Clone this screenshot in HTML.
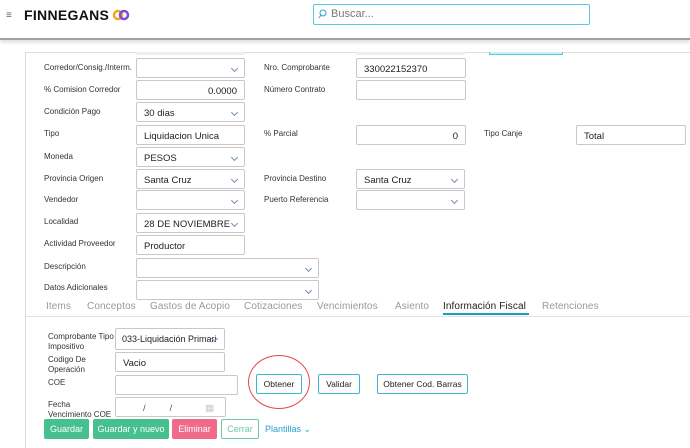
<!DOCTYPE html>
<html><head><meta charset="utf-8"><style>
*{box-sizing:border-box;margin:0;padding:0}
body{width:690px;height:448px;overflow:hidden;background:#fff;font-family:"Liberation Sans",sans-serif;position:relative;color:#222}
.a{position:absolute}
.hdr{left:0;top:0;width:690px;height:40px;background:#fff;border-bottom:2px solid #9aa3ab;box-shadow:0 2px 4px rgba(0,0,0,.15)}
.lab{position:absolute;font-size:8px;color:#333;white-space:nowrap}
.in{position:absolute;height:20px;border:1px solid #c8c8c8;border-radius:2px;font-size:9.5px;padding:5px 7px;background:#fff;color:#222;white-space:nowrap;overflow:hidden}
.sel{padding-right:16px}
.sel::after{content:"";position:absolute;right:7px;top:7px;width:4px;height:4px;border-right:1px solid #6a8fb5;border-bottom:1px solid #6a8fb5;transform:rotate(45deg)}
.r{text-align:right}
.tab{position:absolute;top:301px;font-size:10px;color:#999;letter-spacing:.1px;white-space:nowrap}
.btn{position:absolute;height:20px;border:1px solid #3bb8cf;border-radius:2px;font-size:8.5px;text-align:center;line-height:18px;background:#fff}
.g{position:absolute;top:419px;height:20px;border-radius:2px;font-size:9px;color:#fff;text-align:center;line-height:20px}
</style></head><body>
<div class="a hdr"></div>
<div class="a" style="left:6px;top:10px;font-size:10px;color:#666">≡</div>
<div class="a" style="left:24px;top:7px;font-size:14px;font-weight:bold;color:#111;letter-spacing:.3px">FINNEGANS</div>
<svg class="a" style="left:112px;top:8px" width="18" height="14" viewBox="0 0 18 14"><circle cx="6" cy="7" r="4" fill="none" stroke="#f5a623" stroke-width="2.5"/><circle cx="12" cy="7" r="4" fill="none" stroke="#7b4dd6" stroke-width="2.5"/></svg>
<div class="a" style="left:313px;top:4px;width:277px;height:21px;border:1px solid #5bc8e3;border-radius:2px"></div>
<svg class="a" style="left:318px;top:9px" width="9" height="10" viewBox="0 0 9 10"><circle cx="5" cy="4" r="3" fill="none" stroke="#2a9fd6" stroke-width="1"/><path d="M3 6 L1 9" stroke="#2a9fd6"/></svg>
<div class="a" style="left:331px;top:8px;font-size:11px;color:#777">Buscar...</div>

<div class="a" style="left:25px;top:52px;width:665px;height:396px;border-left:1px solid #ddd;border-top:1px solid #ddd"></div>
<div class="a" style="left:136px;top:52px;width:109px;height:3px;background:#eee"></div>
<div class="a" style="left:356px;top:52px;width:109px;height:3px;background:#eee"></div>
<div class="a" style="left:489px;top:52px;width:74px;height:3px;background:#cbeef5;border:1px solid #5bc8e3;border-top:0"></div>

<div class="lab" style="left:44px;top:63px">Corredor/Consig./Interm.</div><div class="in sel" style="left:136px;top:58px;width:109px"></div>
<div class="lab" style="left:264px;top:63px">Nro. Comprobante</div><div class="in" style="left:356px;top:58px;width:110px">330022152370</div>
<div class="lab" style="left:44px;top:85px">% Comision Corredor</div><div class="in r" style="left:136px;top:80px;width:109px">0.0000</div>
<div class="lab" style="left:264px;top:85px">Número Contrato</div><div class="in" style="left:356px;top:80px;width:110px"></div>
<div class="lab" style="left:44px;top:107px">Condición Pago</div><div class="in sel" style="left:136px;top:102px;width:109px">30 dias</div>
<div class="lab" style="left:44px;top:129px">Tipo</div><div class="in" style="left:136px;top:125px;width:109px">Liquidacion Unica</div>
<div class="lab" style="left:264px;top:129px">% Parcial</div><div class="in r" style="left:356px;top:125px;width:110px">0</div>
<div class="lab" style="left:484px;top:129px">Tipo Canje</div><div class="in" style="left:576px;top:125px;width:110px">Total</div>
<div class="lab" style="left:44px;top:152px">Moneda</div><div class="in sel" style="left:136px;top:147px;width:109px">PESOS</div>
<div class="lab" style="left:44px;top:174px">Provincia Origen</div><div class="in sel" style="left:136px;top:169px;width:109px">Santa Cruz</div>
<div class="lab" style="left:264px;top:174px">Provincia Destino</div><div class="in sel" style="left:356px;top:169px;width:109px">Santa Cruz</div>
<div class="lab" style="left:44px;top:195px">Vendedor</div><div class="in sel" style="left:136px;top:190px;width:109px"></div>
<div class="lab" style="left:264px;top:195px">Puerto Referencia</div><div class="in sel" style="left:356px;top:190px;width:109px"></div>
<div class="lab" style="left:44px;top:217px">Localidad</div><div class="in sel" style="left:136px;top:213px;width:109px">28 DE NOVIEMBRE</div>
<div class="lab" style="left:44px;top:239px">Actividad Proveedor</div><div class="in" style="left:136px;top:235px;width:109px">Productor</div>
<div class="lab" style="left:44px;top:262px">Descripción</div><div class="in sel" style="left:136px;top:258px;width:183px"></div>
<div class="lab" style="left:44px;top:283px">Datos Adicionales</div><div class="in sel" style="left:136px;top:280px;width:183px"></div>

<div class="tab" style="left:46px">Items</div>
<div class="tab" style="left:87px">Conceptos</div>
<div class="tab" style="left:150px">Gastos de Acopio</div>
<div class="tab" style="left:244px">Cotizaciones</div>
<div class="tab" style="left:317px">Vencimientos</div>
<div class="tab" style="left:395px">Asiento</div>
<div class="tab" style="left:443px;color:#222">Información Fiscal</div>
<div class="tab" style="left:542px">Retenciones</div>
<div class="a" style="left:443px;top:313px;width:86px;height:2px;background:#1a9fc4"></div>
<div class="a" style="left:26px;top:316px;width:664px;height:1px;background:#e3e3e3"></div>

<div class="lab" style="left:48px;top:332px;line-height:10px">Comprobante Tipo<br>Impositivo</div>
<div class="in sel" style="left:115px;top:328px;width:110px;height:22px;font-size:9px;padding-left:6px">033-Liquidación Primari</div>
<div class="lab" style="left:48px;top:355px;line-height:10px">Codigo De<br>Operación</div>
<div class="in" style="left:115px;top:352px;width:110px">Vacio</div>
<div class="lab" style="left:48px;top:378px">COE</div>
<div class="in" style="left:115px;top:375px;width:123px"></div>
<div class="btn" style="left:256px;top:374px;width:46px">Obtener</div>
<div class="btn" style="left:318px;top:374px;width:42px">Validar</div>
<div class="btn" style="left:377px;top:374px;width:91px">Obtener Cod. Barras</div>
<div class="a" style="left:248px;top:355px;width:62px;height:54px;border:1.5px solid #e5484d;border-radius:50%"></div>
<div class="lab" style="left:48px;top:400px;line-height:10px">Fecha<br>Vencimiento COE</div>
<div class="in" style="left:115px;top:397px;width:111px;color:#555"><span style="margin-left:20px">/</span><span style="margin-left:24px">/</span><span style="margin-left:33px;color:#ccc">▦</span></div>

<div class="g" style="left:44px;width:45px;background:#45c08e">Guardar</div>
<div class="g" style="left:93px;width:76px;background:#45c08e">Guardar y nuevo</div>
<div class="g" style="left:172px;width:45px;background:#f06a8a">Eliminar</div>
<div class="g" style="left:221px;width:38px;background:#fff;color:#6cc9a0;border:1px solid #6cc9a0;line-height:18px">Cerrar</div>
<div class="a" style="left:265px;top:424px;font-size:9px;color:#2a9fd6">Plantillas ⌄</div>
</body></html>
